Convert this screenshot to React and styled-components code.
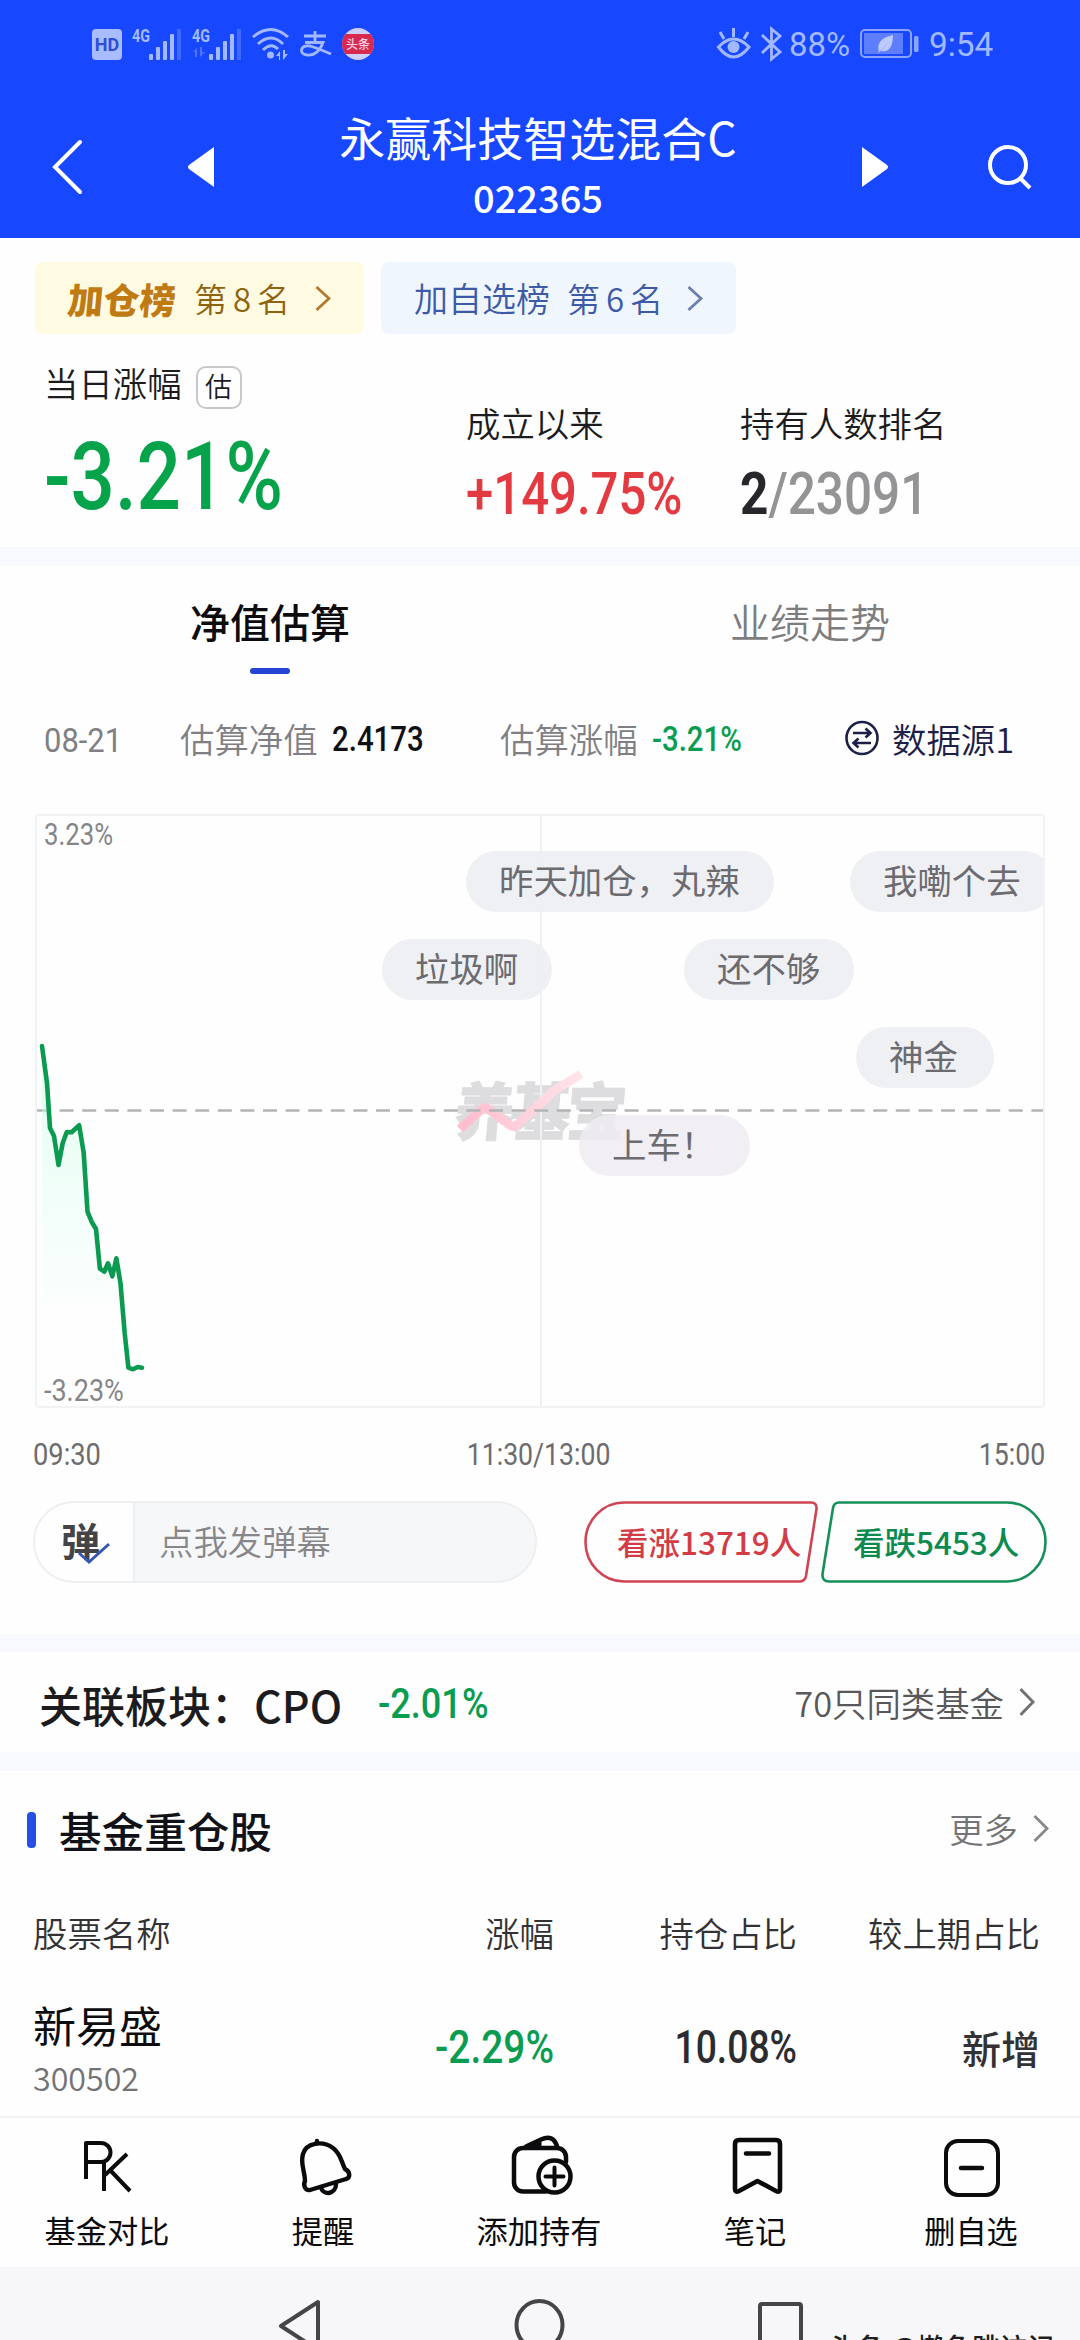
import React from "react";
import { createGlobalStyle, styled } from "styled-components";

const GlobalStyle = createGlobalStyle`
  * {
    box-sizing: border-box;
  }
  body {
    margin: 0;
    background: #fefefe;
    font-family: "Noto Sans CJK SC", sans-serif;
    color: #1c1c1e;
    overflow: hidden;
  }
  svg {
    display: block;
    flex: none;
    overflow: visible;
  }
`;

const Page = styled.main`
  display: flex;
  flex-direction: column;
  width: 1080px;
  height: 2340px;
  overflow: hidden;
  white-space: nowrap;
`;

/* 숫자는 폭이 좁은 DIN 느낌으로 */
const Num = styled.span`
  display: inline-block;
  font-family: "Roboto", sans-serif;
  font-size: ${(p) => p.$size}px;
  font-weight: ${(p) => p.$weight || 500};
  line-height: ${(p) => p.$line || p.$size}px;
  color: ${(p) => p.$color || "inherit"};
  transform: scaleX(${(p) => p.$squeeze || 0.88});
  transform-origin: ${(p) => p.$origin || "left"} center;
`;

const Header = styled.header`
  flex: none;
  height: 238px;
  background: #1747ff;
  color: #fff;
`;

const StatusBar = styled.div`
  display: flex;
  justify-content: space-between;
  align-items: center;
  height: 88px;
  padding: 0 88px 0 92px;
  color: #a3b9ff;
`;

const StatusGroup = styled.div`
  display: flex;
  align-items: center;
  gap: ${(p) => p.$gap}px;
`;

const HdBadge = styled.div`
  width: 30px;
  height: 31px;
  border-radius: 4px;
  background: #a9bcff;
  color: #2b4fd8;
  font: 700 18px/32px "Roboto", sans-serif;
  text-align: center;
`;

const ToutiaoBadge = styled.div`
  display: flex;
  align-items: center;
  width: 32px;
  height: 32px;
  border-radius: 50%;
  background: #ccd0fb;
  overflow: hidden;

  span {
    width: 32px;
    height: 20px;
    background: #d8294f;
    color: #f3d3ea;
    font-size: 12px;
    font-weight: 500;
    line-height: 19px;
    text-align: center;
  }
`;

const StatusText = styled.span`
  font: 400 34px/40px "Roboto", sans-serif;
  transform: scaleX(${(p) => p.$squeeze});
  transform-origin: left center;
  width: ${(p) => p.$width}px;
`;

const TitleBar = styled.div`
  display: flex;
  align-items: center;
  height: 150px;
  padding: 8px 0 0 50px;
`;

const BackButton = styled.div`
  width: 138px;
`;

const TitleBlock = styled.div`
  display: flex;
  flex-direction: column;
  align-items: center;
  width: 648px;
  margin-top: -6px;

  h1 {
    margin: 0;
    font-size: 46px;
    font-weight: 400;
    line-height: 58px;
  }
  span {
    margin-top: 7px;
    font-size: 38px;
    font-weight: 500;
    line-height: 50px;
  }
`;

const SearchButton = styled.div`
  margin-left: 100px;
`;

const Summary = styled.section`
  flex: none;
  height: 309px;
  padding-top: 24px;
`;

const RankRow = styled.div`
  display: flex;
  gap: 17px;
  padding-left: 35px;
`;

const RankChip = styled.div`
  display: flex;
  align-items: center;
  width: ${(p) => p.$width}px;
  height: 72px;
  padding: 0 33px;
  border-radius: 8px;
  background: ${(p) => p.$bg};
  color: ${(p) => p.$color};
  font-size: 33px;
  line-height: 70px;

  svg {
    margin-left: auto;
  }
`;

const RankName = styled.span`
  width: ${(p) => p.$width}px;
  font-size: ${(p) => (p.$strong ? 36 : 34)}px;
  font-weight: ${(p) => (p.$strong ? 900 : 350)};
  ${(p) => p.$strong && "color: #bf7a14; transform: skewX(-5deg);"}
`;

const RankNo = styled.span`
  font-size: 33px;
  font-weight: 350;
  letter-spacing: 6px;
`;

const StatGrid = styled.div`
  display: grid;
  grid-template-columns: 422px 274px 1fr;
  padding: 26px 0 0 44px;
`;

const Stat = styled.div`
  padding-top: ${(p) => p.$top}px;
`;

const StatLabel = styled.div`
  display: flex;
  align-items: center;
  gap: 14px;
  height: 44px;
  font-size: 34.4px;
  font-weight: 350;
`;

const EstimateTag = styled.span`
  width: 46px;
  height: 43px;
  margin-top: 11px;
  border: 2px solid #c8c8ca;
  border-radius: 10px;
  font-size: 27px;
  line-height: 36px;
  text-align: center;
`;

const StatValue = styled.div`
  margin-top: ${(p) => p.$gap}px;
`;

const Divider = styled.div`
  flex: none;
  height: ${(p) => p.$height}px;
  background: #f8f9fc;
`;

const Tabs = styled.nav`
  flex: none;
  display: grid;
  grid-template-columns: 1fr 1fr;
  height: 114px;
  padding-top: 25px;
`;

const Tab = styled.div`
  display: flex;
  flex-direction: column;
  align-items: center;
  gap: 17px;
  font-size: 40px;
  font-weight: ${(p) => (p.$active ? 500 : 350)};
  line-height: 60px;
  color: ${(p) => (p.$active ? "#0c0c0e" : "#7d7d80")};

  &::after {
    content: "";
    width: 40px;
    height: 6px;
    border-radius: 3px;
    background: ${(p) => (p.$active ? "#2544d4" : "transparent")};
  }
`;

const InfoRow = styled.div`
  flex: none;
  display: flex;
  align-items: center;
  height: 116px;
  padding: 0 0 1px 44px;
  color: #808084;
  font-size: 34.4px;
  font-weight: 350;
`;

const InfoCell = styled.div`
  display: flex;
  align-items: center;
  gap: ${(p) => p.$gap || 14}px;
  width: ${(p) => p.$width}px;
  color: ${(p) => p.$color || "inherit"};

  ${Num} {
    padding-top: 4px;
  }
`;

const ChartBox = styled.div`
  flex: none;
  position: relative;
  width: 1010px;
  height: 594px;
  margin: 18px 0 0 35px;
  border: 2px solid #f1f2f3;
  border-radius: 4px;
  overflow: hidden;
`;

const ChartSvg = styled.svg`
  position: absolute;
  inset: -2px;
`;

const ChartBound = styled.div`
  position: absolute;
  left: 7px;
  ${(p) => (p.$bottom ? "bottom: 0" : "top: 3px")};
  color: #858588;
`;

const Watermark = styled.div`
  position: absolute;
  left: 418px;
  top: 259px;
  font-size: 60px;
  font-weight: 900;
  line-height: 66px;
  letter-spacing: -4px;
  color: #dddddf;
  -webkit-text-stroke: 1px #dddddf;
  transform: skewX(-5deg) scaleY(1.04);
`;

const Bubble = styled.div`
  position: absolute;
  left: ${(p) => p.$x}px;
  top: ${(p) => p.$y}px;
  width: ${(p) => p.$width}px;
  height: 61px;
  padding-left: 33px;
  border-radius: 31px;
  background: ${(p) => p.$bg || "rgba(238, 239, 243, 0.93)"};
  color: #6b6b70;
  font-size: 34.4px;
  line-height: 57px;
`;

const TimeAxis = styled.div`
  flex: none;
  display: flex;
  justify-content: space-between;
  align-items: center;
  height: 93px;
  padding: 0 35px 1px 33px;
  color: #6c6c6f;
`;

const ActionRow = styled.div`
  flex: none;
  display: flex;
  height: 133px;
  padding-left: 33px;
`;

const DanmuInput = styled.div`
  display: flex;
  width: 504px;
  height: 82px;
  margin-right: 47px;
  border: 2px solid #eeeff1;
  border-radius: 41px;
  background: #f6f7f9;
  overflow: hidden;
  color: #87878a;
  font-size: 34.4px;
  font-weight: 350;
  line-height: 75px;
`;

const DanmuSwitch = styled.div`
  position: relative;
  width: 100px;
  margin-right: 24px;
  padding-left: 26px;
  background: #fefefe;
  border-right: 2px solid #eeeff1;
  color: #444447;
  font-size: 39px;
  font-weight: 700;
  line-height: 73px;

  svg {
    position: absolute;
    left: 42px;
    top: 37px;
  }
`;

const VoteButton = styled.div`
  position: relative;
  width: ${(p) => p.$width}px;
  height: 82px;
  margin-right: 3px;
  padding-left: ${(p) => p.$pad}px;
  color: ${(p) => p.$color};
  font-size: 31.5px;
  font-weight: 500;
  line-height: 80px;

  svg {
    position: absolute;
    left: 0;
    top: 0;
  }
`;

const SectorRow = styled.section`
  flex: none;
  display: flex;
  align-items: center;
  height: 100px;
  padding: 3px 45px 0 39px;

  strong {
    width: 339px;
    font-size: 43px;
    font-weight: 500;
    line-height: 60px;
  }
`;

const MoreLink = styled.div`
  display: flex;
  align-items: center;
  gap: ${(p) => p.$gap}px;
  margin: 0 0 3px auto;
  font-size: 34.4px;
  font-weight: 350;
  line-height: 44px;
  color: ${(p) => p.$color};
`;

const HoldingHead = styled.div`
  flex: none;
  display: flex;
  align-items: center;
  height: 122px;
  padding: 0 31px 5px 27px;

  h2 {
    margin: 0 0 0 23px;
    font-size: 42.6px;
    font-weight: 500;
    line-height: 60px;
    color: #111118;
  }
`;

const Marker = styled.i`
  width: 9px;
  height: 36px;
  border-radius: 4px;
  background: #2450e6;
`;

const HoldingRow = styled.div`
  flex: none;
  display: grid;
  grid-template-columns: 281px 240px 243px 243px;
  align-items: center;
  height: ${(p) => p.$height}px;
  padding: ${(p) => p.$top || 0}px 0 0 33px;
  font-size: 34.4px;
  font-weight: 350;
  color: #323235;

  > * + * {
    text-align: right;
  }
`;

const StockName = styled.div`
  display: flex;
  flex-direction: column;
  font-size: 43px;
  font-weight: 400;
  line-height: 58px;
  color: #0d0d0f;

  small {
    margin-top: 3px;
    font-size: 32.2px;
    font-weight: 350;
    line-height: 42px;
    color: #737376;
  }
`;

const Change = styled.span`
  font-size: 39px;
  font-weight: 500;
`;

const BottomNav = styled.nav`
  flex: none;
  display: grid;
  grid-template-columns: repeat(5, 216px);
  height: 151px;
  border-top: 2px solid #f3f3f4;
`;

const NavItem = styled.div`
  display: flex;
  flex-direction: column;
  align-items: center;
  padding: 16px 2px 0 0;
  font-size: 31.2px;
  color: #0b0b0d;
  line-height: 44px;

  svg {
    margin-bottom: 10px;
  }
`;

const SystemBar = styled.footer`
  flex: none;
  position: relative;
  display: flex;
  gap: 193px;
  height: 73px;
  padding: 32px 0 0 276px;
  background: #f7f7fa;
  overflow: hidden;
`;

const Credit = styled.span`
  position: absolute;
  left: 829px;
  top: 59px;
  font-size: 27.5px;
  font-weight: 500;
  line-height: 40px;
  color: #1e1e20;
`;

const Chevron = ({ color, height = 25, stroke = 2.8 }) => (
  <svg width="16" height={height} viewBox="0 0 16 26" fill="none" stroke={color} strokeWidth={stroke} preserveAspectRatio="none">
    <path d="M1.5 1 14 13 1.5 25" />
  </svg>
);

const Signal = ({ data }) => (
  <svg width="50" height="34" viewBox="0 0 50 34" fill="currentColor">
    <text x="0" y="15" fontFamily="Roboto" fontWeight="700" fontSize="18" textLength="18" lengthAdjust="spacingAndGlyphs">4G</text>
    {data && <path d="M1 25l4-4v9H3v-5zM8 20v10l5-5h-3v-5z" opacity=".4" />}
    <rect x="17" y="27" width="4" height="6" rx="1" />
    <rect x="24" y="20" width="4" height="13" rx="1" />
    <rect x="31" y="14" width="4" height="19" rx="1" />
    <rect x="38" y="7" width="4" height="26" rx="1" />
    <rect x="45" y="2" width="4" height="31" rx="1" opacity=".3" />
  </svg>
);

const WifiIcon = () => (
  <svg width="38" height="34" viewBox="0 0 38 34" fill="none" stroke="currentColor" strokeWidth="3">
    <path d="M1 10Q19-5 36 10M6 17Q19 5 31 17M11 23Q19 15 26 22" />
    <circle cx="18.5" cy="28" r="3.5" fill="currentColor" stroke="none" />
    <path d="M24 29l4-5v9h-1v-4zM31 23v10l5-6h-3v-4z" fill="currentColor" stroke="none" />
  </svg>
);

/* 알리페이 로고 */
const AlipayIcon = () => (
  <svg width="32" height="34" viewBox="0 0 32 34" fill="none" stroke="currentColor" strokeWidth="2.8">
    <path d="M4 9H26M15 4V15M5 15.500H23Q18 29 7 28 1 27 1.500 23 2.500 18 10 19 17 21 31 27" />
  </svg>
);

const EyeIcon = () => (
  <svg width="34" height="34" viewBox="-2 0 34 34" fill="none" stroke="currentColor" strokeWidth="3">
    <path d="M1.500 20Q16.500 4 32 20 16.500 40 1.500 20ZM16.500 1v9M3 5l4 7M31 5l-4 7" />
    <circle cx="16.500" cy="20" r="6" fill="currentColor" stroke="none" />
  </svg>
);

const BluetoothIcon = () => (
  <svg width="22" height="34" viewBox="-3 0 22 34" fill="none" stroke="currentColor" strokeWidth="2.8">
    <path d="M1 8 19 25 10.500 32V2L19 9 1 26" />
  </svg>
);

const BatteryIcon = () => (
  <svg width="60" height="30" viewBox="0 0 60 30">
    <rect x="1" y="1" width="50" height="27" rx="4" fill="none" stroke="#8ba4ff" strokeWidth="2" />
    <rect x="4" y="4" width="39" height="21" fill="#5c7eff" />
    <rect x="54" y="7" width="4.500" height="16" rx="1.500" fill="#8ba4ff" />
    <path d="M19 23Q15 10 33 6 33 24 21 22L29 12 18 25Z" fill="#bccaff" />
  </svg>
);

const SwapIcon = () => (
  <svg width="34" height="36" viewBox="0 0 34 36" fill="none" stroke="#1c2047" strokeWidth="2.600">
    <ellipse cx="17" cy="18" rx="15.500" ry="16" />
    <path d="M8 13h17M20.500 8.500 25.500 13 20.500 17.500M26 23H9M13.500 18.500 8.500 23 13.500 27.500" />
  </svg>
);

const LINE =
  "7,232 12,269 15,314 19,322 23.500,351 27.700,329 31.800,318 36.600,318.300 44.200,311.300 48.700,339 52.500,397.700 56.600,407.700 61,415 64.900,454.700 69.300,457.700 73,449.300 77.300,462.300 81.400,444.300 85.500,469.300 89.700,519.300 93.400,553.700 98,555.300 102.700,553 107,553.700";

const BUBBLES = [
  { text: "昨天加仓，丸辣", x: 429, y: 35, width: 308 },
  { text: "我嘞个去", x: 813, y: 35, width: 204 },
  { text: "垃圾啊", x: 345, y: 123, width: 170 },
  { text: "还不够", x: 647, y: 123, width: 170 },
  { text: "神金", x: 819, y: 211, width: 138 },
  { text: "上车！", x: 542, y: 299, width: 171, bg: "rgba(240, 236, 242, 0.85)" },
];

const NavIcon = ({ name }) => {
  const common = { width: 66, height: 64, viewBox: "-2 0 66 64", fill: "none", stroke: "#0b0b0d", strokeWidth: 4, strokeLinecap: "round", strokeLinejoin: "round" };
  if (name === "pk") {
    return (
      <svg {...common} viewBox="0 0 66 64" strokeWidth="4" strokeLinecap="butt">
        <path d="M12 45V9H27a9.500 9.500 0 0 1 0 19H12M30 28V57M53 20 31 41M36 36 56 57" />
      </svg>
    );
  }
  if (name === "bell") {
    return (
      <svg {...common} strokeWidth="4.400">
        <path d="M13 47C13 37 8 30 11 20 14 9 30 6 41 14 49 20 49 27 53 35 59 38 58 44 54 45L18 56C13 57 11 51 13 47Z" />
        <path d="M29 54C32 62 44 60 44 50M25 8V7" />
      </svg>
    );
  }
  if (name === "wallet") {
    return (
      <svg {...common} strokeWidth="4.500">
        <path d="M38 57.500H15a9 9 0 0 1-9-9V23a9 9 0 0 1 9-9H49a9 9 0 0 1 9 9v5M18 12.500 33 5.500Q45 0 49 12" />
        <path d="M20 12 33 6V12Z" fill="#0b0b0d" strokeWidth="1" />
        <circle cx="46.500" cy="42.500" r="16" fill="#fefefe" />
        <path d="M46.500 33.500v18M37.500 42.500h18" strokeWidth="4" />
      </svg>
    );
  }
  if (name === "note") {
    return (
      <svg {...common} strokeWidth="4.600">
        <path d="M15 6H52q4 0 4 4V55q0 4-4 2L33.500 47 15 57q-4 2-4-2V10q0-4 4-4ZM22 19.500H45" />
      </svg>
    );
  }
  return (
    <svg {...common} viewBox="0 0 66 64">
      <rect x="8" y="7" width="52" height="54" rx="12" />
      <path d="M23 34H44" strokeWidth="4.500" />
    </svg>
  );
};

const NAV_ITEMS = [
  { name: "pk", label: "基金对比" },
  { name: "bell", label: "提醒" },
  { name: "wallet", label: "添加持有" },
  { name: "note", label: "笔记" },
  { name: "remove", label: "删自选" },
];

const App = () => {
  return (
    <Page>
      <GlobalStyle />
      <Header>
        <StatusBar>
          <StatusGroup $gap={10}>
            <HdBadge>HD</HdBadge>
            <Signal />
            <Signal data />
            <WifiIcon />
            <AlipayIcon />
            <ToutiaoBadge>
              <span>头条</span>
            </ToutiaoBadge>
          </StatusGroup>
          <StatusGroup $gap={9}>
            <EyeIcon />
            <BluetoothIcon />
            <StatusText $width={62} $squeeze={0.97}>88%</StatusText>
            <BatteryIcon />
            <StatusText $width={63} $squeeze={0.98}>9:54</StatusText>
          </StatusGroup>
        </StatusBar>
        <TitleBar>
          <BackButton>
            <svg width="34" height="58" viewBox="0 0 34 58" fill="none" stroke="#fff" strokeWidth="4" strokeLinecap="round">
              <path d="M30 4 5 29 30 54" />
            </svg>
          </BackButton>
          <svg width="26" height="40" viewBox="0 0 26 40" fill="#fff">
            <path d="M26 0V40L1 22Q-1 20 1 18Z" />
          </svg>
          <TitleBlock>
            <h1>永赢科技智选混合C</h1>
            <span>022365</span>
          </TitleBlock>
          <svg width="26" height="40" viewBox="0 0 26 40" fill="#fff">
            <path d="M0 0V40L25 22Q27 20 25 18Z" />
          </svg>
          <SearchButton>
            <svg width="44" height="46" viewBox="0 0 44 46" fill="none" stroke="#fff" strokeWidth="4">
              <circle cx="20" cy="21" r="18" />
              <path d="M32 34 42 44" />
            </svg>
          </SearchButton>
        </TitleBar>
      </Header>

      <Summary>
        <RankRow>
          <RankChip $width={329} $bg="#fffbe2" $color="#8f6410">
            <RankName $strong $width={126}>加仓榜</RankName>
            <RankNo>第8名</RankNo>
            <Chevron color="#b07a30" />
          </RankChip>
          <RankChip $width={355} $bg="#f0f6fe" $color="#3d5aa8">
            <RankName $width={153}>加自选榜</RankName>
            <RankNo>第6名</RankNo>
            <Chevron color="#6a7fae" />
          </RankChip>
        </RankRow>
        <StatGrid>
          <Stat $top={0}>
            <StatLabel>
              当日涨幅<EstimateTag>估</EstimateTag>
            </StatLabel>
            <StatValue $gap={33}>
              <Num $size={95} $line={80} $color="#06a34a" $squeeze={0.822}>-3.21%</Num>
            </StatValue>
          </Stat>
          <Stat $top={40}>
            <StatLabel>成立以来</StatLabel>
            <StatValue $gap={20}>
              <Num $size={60} $line={60} $color="#e23a40" $squeeze={0.818}>+149.75%</Num>
            </StatValue>
          </Stat>
          <Stat $top={40}>
            <StatLabel>持有人数排名</StatLabel>
            <StatValue $gap={20}>
              <Num $size={60} $line={60} $color="#949496" $squeeze={0.825}>
                <b style={{ color: "#26262b" }}>2</b>/23091
              </Num>
            </StatValue>
          </Stat>
        </StatGrid>
      </Summary>

      <Divider $height={19} />

      <Tabs>
        <Tab $active>净值估算</Tab>
        <Tab>业绩走势</Tab>
      </Tabs>
      <InfoRow>
        <InfoCell $width={136}>
          <Num $size={34} $squeeze={0.91} $weight={450}>08-21</Num>
        </InfoCell>
        <InfoCell $width={320}>
          估算净值
          <Num $size={35} $color="#101014" $squeeze={0.84}>2.4173</Num>
        </InfoCell>
        <InfoCell $width={345}>
          估算涨幅
          <Num $size={35} $color="#0a9c50" $squeeze={0.84}>-3.21%</Num>
        </InfoCell>
        <InfoCell $gap={13} $color="#1c2047">
          <SwapIcon />
          数据源1
        </InfoCell>
      </InfoRow>

      <ChartBox>
        <Watermark>养基宝</Watermark>
        <ChartSvg width="1010" height="594" viewBox="0 0 1010 594" fill="none">
          <defs>
            <linearGradient id="fall" x1="0" y1="0" x2="0" y2="1">
              <stop offset="0" stopColor="#c8ffe4" stopOpacity=".6" />
              <stop offset="1" stopColor="#e8fffa" stopOpacity="0" />
            </linearGradient>
            <linearGradient id="tick" x1="0" y1="0" x2="1" y2="0">
              <stop offset="0" stopColor="#ffbccd" />
              <stop offset="1" stopColor="#ffe4ea" />
            </linearGradient>
          </defs>
          <path d="M506 0V594" stroke="#eff0f2" strokeWidth="2" />
          <path d="M425 315 447 295Q450 292 453 295L475 311Q479 314 483 310L520 276 546 260" stroke="url(#tick)" strokeWidth="9" />
          <path d="M2 296.500H1008" stroke="#b4b4b6" strokeWidth="2.500" strokeDasharray="14 8.600" />
          <polygon points={`${LINE} 85,490 7,490`} fill="url(#fall)" />
          <polyline points={LINE} stroke="#0a9a50" strokeWidth="4.600" strokeLinejoin="round" strokeLinecap="round" />
        </ChartSvg>
        <ChartBound>
          <Num $size={31} $line={31} $weight={400} $squeeze={0.83}>3.23%</Num>
        </ChartBound>
        <ChartBound $bottom>
          <Num $size={31} $line={31} $weight={400} $squeeze={0.87}>-3.23%</Num>
        </ChartBound>
        {BUBBLES.map((b) => (
          <Bubble key={b.text} $x={b.x} $y={b.y} $width={b.width} $bg={b.bg}>
            {b.text}
          </Bubble>
        ))}
      </ChartBox>

      <TimeAxis>
        <Num $size={31} $weight={450} $squeeze={0.88}>09:30</Num>
        <Num $size={31} $weight={450} $squeeze={0.86} $origin="center">11:30/13:00</Num>
        <Num $size={31} $weight={450} $squeeze={0.86} $origin="right">15:00</Num>
      </TimeAxis>

      <ActionRow>
        <DanmuInput>
          <DanmuSwitch>
            弹
            <svg width="34" height="26" viewBox="0 0 34 26" fill="none" stroke="#3558b0" strokeWidth="3">
              <path d="M2 13 12 22 32 4" />
            </svg>
          </DanmuSwitch>
          点我发弹幕
        </DanmuInput>
        <VoteButton $width={234} $pad={33} $color="#d23c46">
          <svg width="234" height="82" viewBox="0 0 234 82" fill="none" stroke="#cf4452" strokeWidth="2.600">
            <path d="M40 1.500H227Q233 1.500 232.500 8L222 75Q221 80.500 215 80.500H40A38.500 39.500 0 0 1 40 1.500Z" />
          </svg>
          看涨13719人
        </VoteButton>
        <VoteButton $width={226} $pad={32} $color="#0d8a50">
          <svg width="226" height="82" viewBox="0 0 226 82" fill="none" stroke="#15905a" strokeWidth="2.600">
            <path d="M186 1.500H18Q13 1.500 12 7L1.500 73Q1 80.500 8 80.500H186A38.500 39.500 0 0 0 186 1.500Z" />
          </svg>
          看跌5453人
        </VoteButton>
      </ActionRow>

      <Divider $height={18} />

      <SectorRow>
        <strong>关联板块：CPO</strong>
        <Num $size={43} $color="#0a9c50" $squeeze={0.84}>-2.01%</Num>
        <MoreLink $gap={15} $color="#58585b">
          70只同类基金
          <Chevron color="#707073" height={28} />
        </MoreLink>
      </SectorRow>

      <Divider $height={19} />

      <HoldingHead>
        <Marker />
        <h2>基金重仓股</h2>
        <MoreLink $gap={15} $color="#747477">
          更多
          <Chevron color="#88888b" height={27} />
        </MoreLink>
      </HoldingHead>
      <HoldingRow $height={78}>
        <span>股票名称</span>
        <span>涨幅</span>
        <span>持仓占比</span>
        <span>较上期占比</span>
      </HoldingRow>
      <HoldingRow $height={145} $top={6}>
        <StockName>
          新易盛
          <small>300502</small>
        </StockName>
        <Num $size={46} $color="#0a9c50" $squeeze={0.845} $origin="right">-2.29%</Num>
        <Num $size={46} $color="#2b2b30" $squeeze={0.81} $origin="right">10.08%</Num>
        <Change>新增</Change>
      </HoldingRow>

      <BottomNav>
        {NAV_ITEMS.map((item) => (
          <NavItem key={item.name}>
            <NavIcon name={item.name} />
            {item.label}
          </NavItem>
        ))}
      </BottomNav>

      <SystemBar>
        <svg width="46" height="54" viewBox="0 0 46 54" fill="none" stroke="#454548" strokeWidth="4" strokeLinejoin="round">
          <path d="M42 3V51L5 27Z" />
        </svg>
        <svg width="50" height="54" viewBox="0 0 50 54" fill="none" stroke="#454548" strokeWidth="4">
          <ellipse cx="24.500" cy="26" rx="23" ry="24" />
        </svg>
        <svg width="46" height="54" viewBox="0 0 46 54" fill="none" stroke="#454548" strokeWidth="4">
          <rect x="2" y="5" width="41" height="44" rx="2" />
        </svg>
        <Credit>头条 @懒鱼跳访记</Credit>
      </SystemBar>
    </Page>
  );
};

export default App;
